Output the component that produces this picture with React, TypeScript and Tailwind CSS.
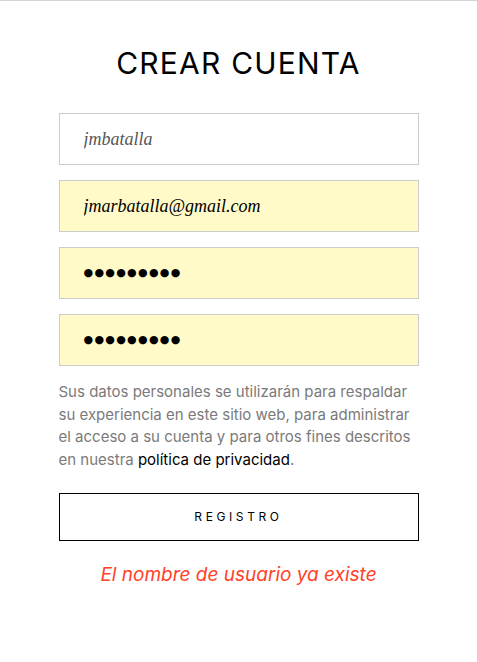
import React from 'react';

const App: React.FC = () => {
  const boxBase = "h-[52px] w-full border border-[#cccccc] pl-6 outline-none";

  return (
    <div className="min-h-[662px] w-full border-t border-[#d4d4d4] bg-white" style={{ fontFamily: 'Inter, "Liberation Sans", sans-serif' }}>
      <div className="mx-auto flex w-[360px] flex-col pt-[40px]">
        <h1 className="text-center text-[30px] font-normal tracking-[0.04em] text-black">
          CREAR CUENTA
        </h1>

        {/* form fields */}
        <div className="mt-[27px] flex flex-col gap-[15px]">
          <input
            className={`${boxBase} bg-white text-[18px] italic text-[#555]`}
            style={{ fontFamily: '"Liberation Serif", serif' }}
            defaultValue="jmbatalla"
          />
          <input
            className={`${boxBase} bg-[#fffac8] text-[18px] italic text-black`}
            style={{ fontFamily: '"Liberation Serif", serif' }}
            defaultValue="jmarbatalla@gmail.com"
          />
          <div
            className={`${boxBase} flex items-center bg-[#fffac8] text-[11px] tracking-[1.3px] text-black`}
            style={{ fontFamily: '"DejaVu Sans", sans-serif' }}
          >
            ●●●●●●●●●
          </div>
          <div
            className={`${boxBase} flex items-center bg-[#fffac8] text-[11px] tracking-[1.3px] text-black`}
            style={{ fontFamily: '"DejaVu Sans", sans-serif' }}
          >
            ●●●●●●●●●
          </div>
        </div>

        <p className="mt-[15px] text-[15px] leading-[22.5px] text-[#7a7a7a]">
          Sus datos personales se utilizarán para respaldar su experiencia en este sitio web, para administrar el acceso a su cuenta y para otros fines descritos en nuestra{' '}
          <span className="text-black">política de privacidad</span>.
        </p>

        <button className="mt-[22px] h-[48px] w-full border border-black bg-white text-[12px] tracking-[0.3em] text-black">
          REGISTRO
        </button>

        <p className="mt-[20px] text-center text-[19px] italic text-[#ff4128]">
          El nombre de usuario ya existe
        </p>
      </div>
    </div>
  );
};

export default App;
